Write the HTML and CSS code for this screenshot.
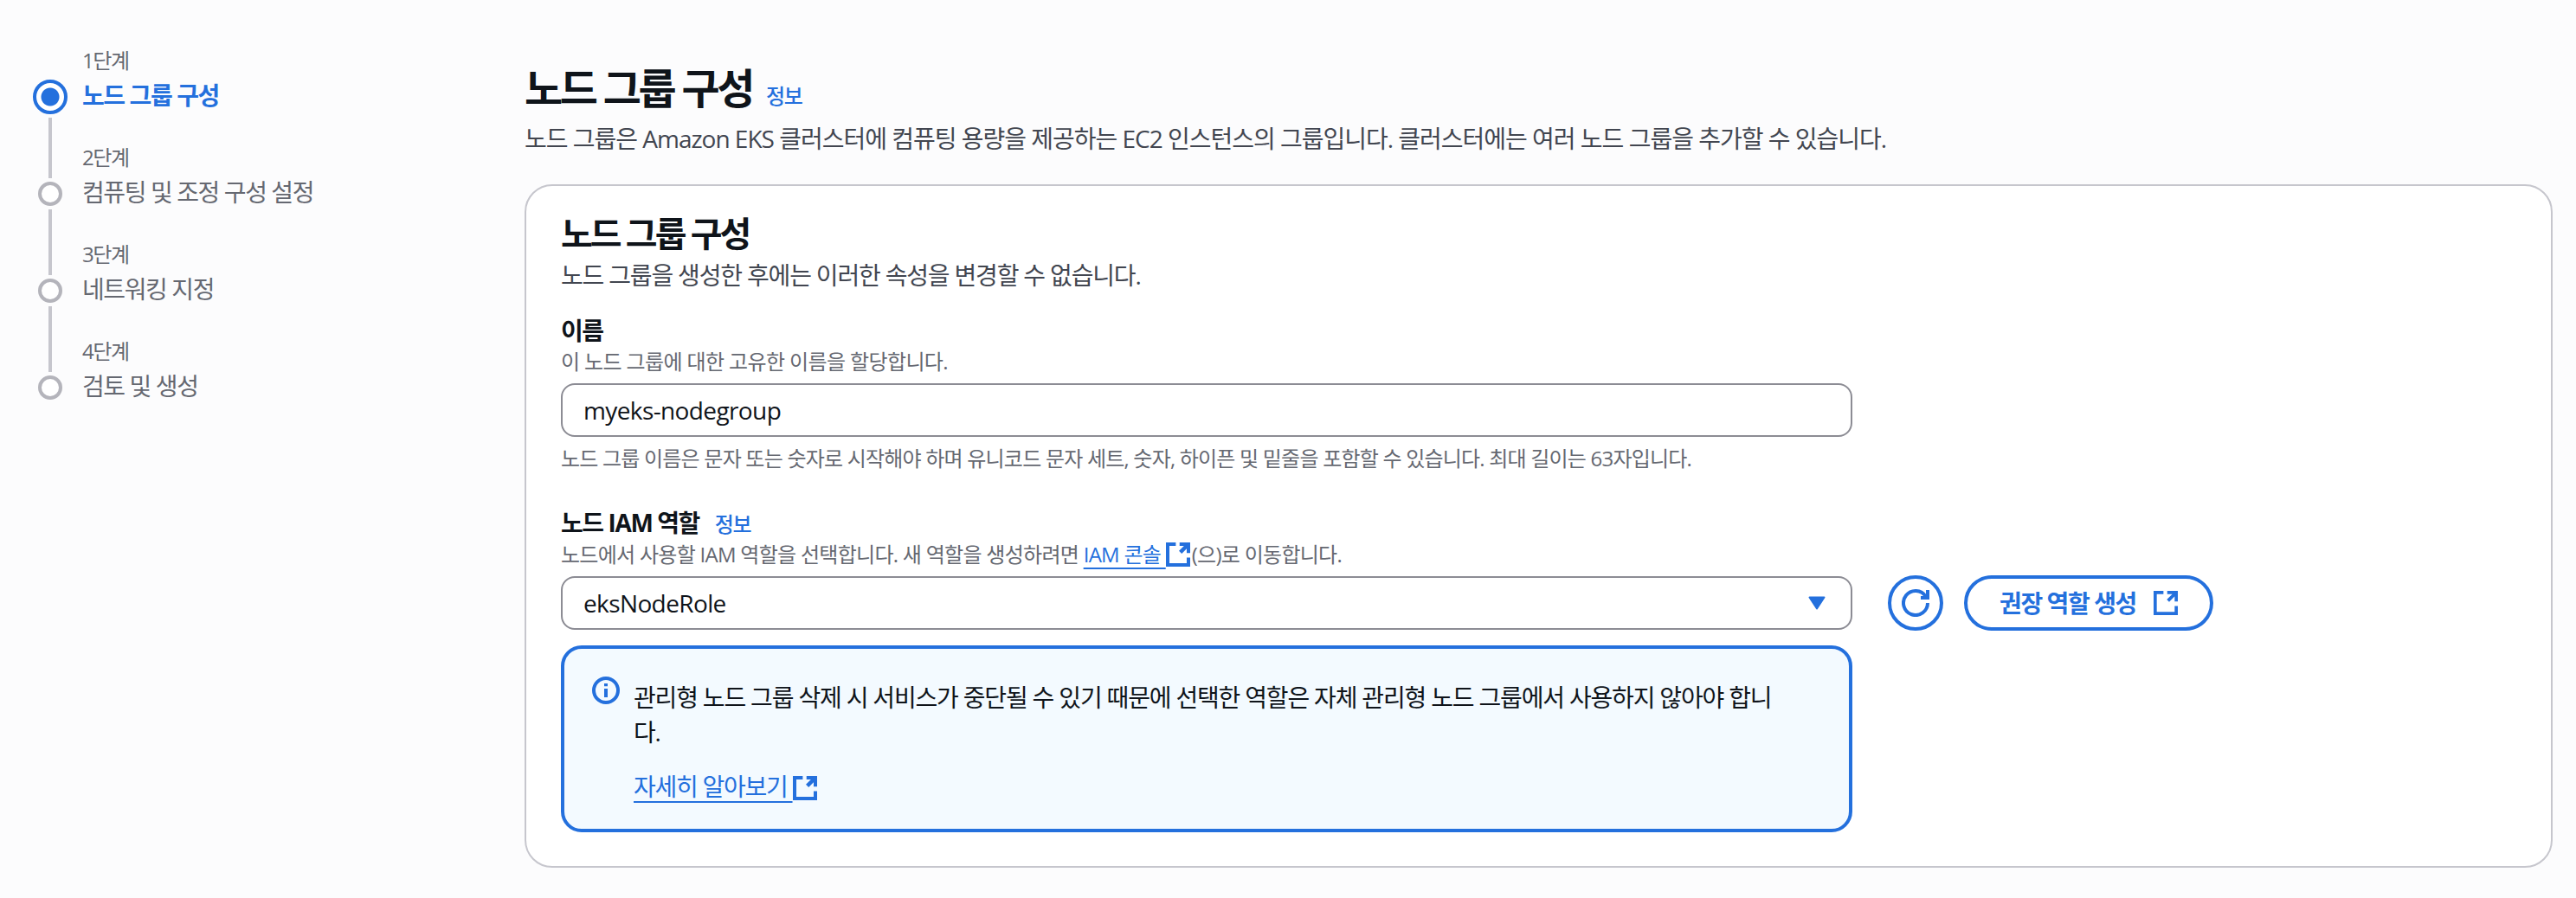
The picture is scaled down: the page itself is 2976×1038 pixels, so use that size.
FILE: index.html
```html
<!DOCTYPE html>
<html lang="ko">
<head>
    <meta charset="UTF-8">
    <meta name="viewport" content="width=device-width, initial-scale=1.0">
    <title>노드 그룹 구성</title>
    <link rel="stylesheet" href="styles.css">
</head>
<body>

<nav class="steps">
    <div class="step step-active">
        <div class="step-marker"><span class="step-dot"></span></div>
        <div class="step-text">
            <span class="step-label">1단계</span>
            <a class="step-title">노드 그룹 구성</a>
        </div>
    </div>
    <div class="step">
        <div class="step-marker"><span class="step-line"></span><span class="step-dot"></span></div>
        <div class="step-text">
            <span class="step-label">2단계</span>
            <a class="step-title">컴퓨팅 및 조정 구성 설정</a>
        </div>
    </div>
    <div class="step">
        <div class="step-marker"><span class="step-line"></span><span class="step-dot"></span></div>
        <div class="step-text">
            <span class="step-label">3단계</span>
            <a class="step-title">네트워킹 지정</a>
        </div>
    </div>
    <div class="step">
        <div class="step-marker"><span class="step-line"></span><span class="step-dot"></span></div>
        <div class="step-text">
            <span class="step-label">4단계</span>
            <a class="step-title">검토 및 생성</a>
        </div>
    </div>
</nav>

<main class="content">
    <div class="page-title">
        <h1>노드 그룹 구성</h1>
        <a class="info-link">정보</a>
    </div>
    <p class="page-desc">노드 그룹은 Amazon EKS 클러스터에 컴퓨팅 용량을 제공하는 EC2 인스턴스의 그룹입니다. 클러스터에는 여러 노드 그룹을 추가할 수 있습니다.</p>

    <section class="card">
        <h2>노드 그룹 구성</h2>
        <p class="card-desc">노드 그룹을 생성한 후에는 이러한 속성을 변경할 수 없습니다.</p>

        <div class="field">
            <div class="field-label">이름</div>
            <div class="hint">이 노드 그룹에 대한 고유한 이름을 할당합니다.</div>
            <div class="input">myeks-nodegroup</div>
            <div class="hint hint-below">노드 그룹 이름은 문자 또는 숫자로 시작해야 하며 유니코드 문자 세트, 숫자, 하이픈 및 밑줄을 포함할 수 있습니다. 최대 길이는 63자입니다.</div>
        </div>

        <div class="field field-role">
            <div class="field-label">노드 IAM 역할 <a class="info-link">정보</a></div>
            <div class="hint">노드에서 사용할 IAM 역할을 선택합니다. 새 역할을 생성하려면 <a class="link">IAM 콘솔&nbsp;</a><svg class="icon-ext icon-small" viewBox="0 0 16 16"><path d="M15 7V1H9M15 1 9.5 6.5M6.5 1H1v14h14v-5"/></svg>(으)로 이동합니다.</div>
            <div class="select-row">
                <div class="input select">
                    <span>eksNodeRole</span>
                    <svg class="caret" viewBox="0 0 20 16"><path d="M1.5 1.5h17L10 14.5z"/></svg>
                </div>
                <button class="btn-round">
                    <svg class="icon-refresh" viewBox="0 0 16 16"><path d="M15 8a7 7 0 1 1-1.1-3.76"/><path d="M15 .5V5h-4"/></svg>
                </button>
                <button class="btn">권장 역할 생성<svg class="icon-ext" viewBox="0 0 16 16"><path d="M15 7V1H9M15 1 9.5 6.5M6.5 1H1v14h14v-5"/></svg></button>
            </div>
            <div class="alert">
                <svg class="icon-info" viewBox="0 0 16 16"><circle cx="8" cy="8" r="7"/><path d="M8 7v5M8 4v1.6"/></svg>
                <div class="alert-body">
                    <p>관리형 노드 그룹 삭제 시 서비스가 중단될 수 있기 때문에 선택한 역할은 자체 관리형 노드 그룹에서 사용하지 않아야 합니다.</p>
                    <p class="alert-more"><a class="link">자세히 알아보기&nbsp;</a><svg class="icon-ext icon-small" viewBox="0 0 16 16"><path d="M15 7V1H9M15 1 9.5 6.5M6.5 1H1v14h14v-5"/></svg></p>
                </div>
            </div>
        </div>
    </section>
</main>

</body>
</html>
```

FILE: styles.css
```css
body {
    margin: 0;
    display: flex;
    min-height: 1038px;
    background-color: #fcfcfd;
    color: #0f141a;
    font-family: "Open Sans", "Noto Sans CJK KR", sans-serif;
    font-size: 28px;
    line-height: 40px;
    letter-spacing: -0.05em;
}
a {
    color: #2470dd;
}

/* left steps */
.steps {
    width: 606px;
    flex-shrink: 0;
    padding: 18px 0 0 38px;
    box-sizing: border-box;
}
.step {
    display: flex;
    height: 112px;
}
.step-active {
    height: 114px;
}
.step-active + .step {
    height: 106px;
}
.step-marker {
    width: 40px;
    display: flex;
    flex-direction: column;
    align-items: center;
    justify-content: flex-end;
}
.step-line {
    flex: 1;
    width: 4px;
    margin: 4px 0;
    background-color: #c6c6cd;
}
.step-dot {
    width: 28px;
    height: 28px;
    box-sizing: border-box;
    border: 4px solid #b4b4bb;
    border-radius: 50%;
    background-color: #fff;
}
.step-active .step-dot {
    width: 40px;
    height: 40px;
    border-color: #2470dd;
    background: radial-gradient(circle, #2470dd 10px, #fff 11px);
}
.step-text {
    margin-left: 17px;
    display: flex;
    flex-direction: column;
    justify-content: flex-end;
    gap: 8px;
    white-space: nowrap;
}
.step-active .step-text {
    padding-bottom: 6px;
}
.step-label {
    font-size: 24px;
    line-height: 32px;
    color: #656871;
}
.step-title {
    font-size: 28px;
    line-height: 32px;
    color: #656871;
}
.step-active .step-title {
    color: #2470dd;
    font-weight: 700;
}

/* main column */
.content {
    flex: 1;
    padding: 74px 27px 0 0;
}
.page-title {
    display: flex;
    align-items: baseline;
    gap: 16px;
}
h1 {
    margin: 0;
    font-size: 48px;
    line-height: 56px;
    font-weight: 700;
    letter-spacing: -0.07em;
}
.info-link {
    font-size: 24px;
    line-height: 1;
    font-weight: 500;
}
.page-desc {
    margin: 10px 0 0;
    color: #424650;
    letter-spacing: -0.036em;
}
.card {
    margin-top: 33px;
    padding: 31px 40px 39px;
    background-color: #fff;
    border: 2px solid #c6c6cd;
    border-radius: 32px;
}
h2 {
    margin: 0;
    font-size: 40px;
    line-height: 48px;
    font-weight: 700;
    letter-spacing: -0.076em;
}
.card-desc {
    margin: 4px 0 0;
    color: #424650;
    letter-spacing: -0.042em;
}
.field {
    margin-top: 24px;
}
.field-role {
    margin-top: 38px;
}
.field-label {
    height: 40px;
    font-weight: 700;
}
.field-label .info-link {
    margin-left: 12px;
}
.hint {
    font-size: 24px;
    line-height: 32px;
    color: #656871;
    letter-spacing: -0.026em;
}
.hint-below {
    margin-top: 9px;
    letter-spacing: -0.033em;
}
.field-role .hint {
    height: 32px;
    margin-top: 1px;
    letter-spacing: -0.03em;
}
.input {
    width: 1492px;
    height: 62px;
    box-sizing: border-box;
    margin-top: 9px;
    padding: 0 24px;
    display: flex;
    align-items: center;
    background-color: #fff;
    border: 2px solid #8c8c94;
    border-radius: 16px;
    letter-spacing: -0.022em;
}
.select-row {
    display: flex;
    align-items: center;
    margin-top: 8px;
}
.select {
    margin-top: 0;
    justify-content: space-between;
    padding-right: 29px;
}
.caret {
    width: 20px;
    height: 16px;
    fill: #2470dd;
    stroke: #2470dd;
    stroke-width: 2;
    stroke-linejoin: round;
}
.btn-round,
.btn {
    height: 64px;
    box-sizing: border-box;
    padding: 0;
    display: flex;
    align-items: center;
    justify-content: center;
    background-color: #fff;
    border: 4px solid #2470dd;
    border-radius: 32px;
    color: #2470dd;
    font: inherit;
    font-weight: 700;
    letter-spacing: inherit;
}
.btn-round {
    width: 64px;
    margin-left: 41px;
}
.btn {
    width: 288px;
    margin-left: 24px;
    gap: 20px;
}
.icon-ext,
.icon-refresh,
.icon-info {
    fill: none;
    stroke: #2470dd;
    stroke-width: 2;
    flex-shrink: 0;
}
.icon-ext {
    width: 28px;
    height: 28px;
    stroke-width: 2.2;
}
.icon-small {
    vertical-align: -1px;
    margin: -4px 2px -4px 0;
    stroke-width: 2.6;
}
.icon-refresh {
    width: 32px;
    height: 32px;
}
.icon-info {
    width: 32px;
    height: 32px;
    margin-top: -4px;
}
.link {
    text-decoration: underline;
    text-decoration-thickness: 2px;
    text-underline-offset: 6px;
}
.alert {
    width: 1492px;
    box-sizing: border-box;
    margin-top: 17px;
    padding: 36px 74px 29px 32px;
    display: flex;
    gap: 16px;
    align-items: flex-start;
    background-color: #f3faff;
    border: 4px solid #2470dd;
    border-radius: 24px;
    letter-spacing: -0.042em;
    word-break: break-all;
}
.alert-body p {
    margin: 0;
}
.alert-body .alert-more {
    margin-top: 23px;
    letter-spacing: -0.045em;
}
```
